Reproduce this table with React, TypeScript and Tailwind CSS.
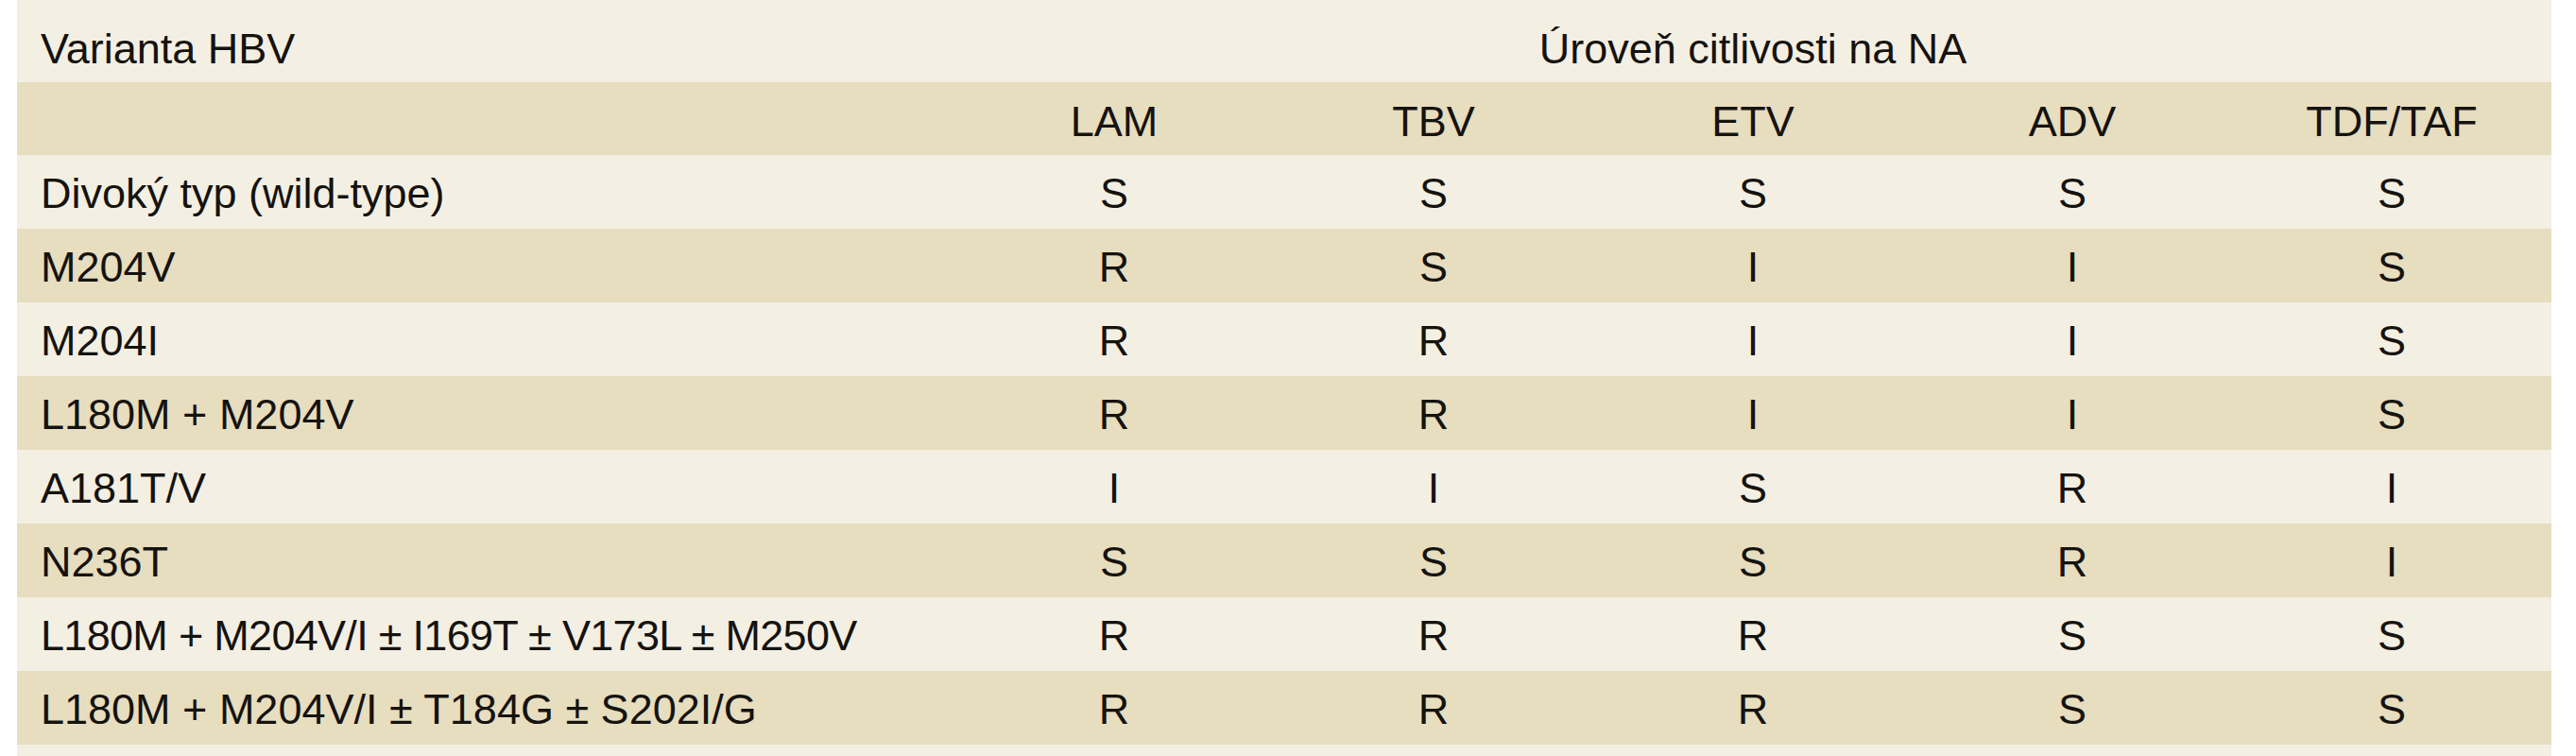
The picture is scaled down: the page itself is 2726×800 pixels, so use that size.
const columns = ['LAM', 'TBV', 'ETV', 'ADV', 'TDF/TAF'];

const rows: { variant: string; values: string[]; tight?: boolean }[] = [
  { variant: 'Divoký typ (wild-type)', values: ['S', 'S', 'S', 'S', 'S'] },
  { variant: 'M204V', values: ['R', 'S', 'I', 'I', 'S'] },
  { variant: 'M204I', values: ['R', 'R', 'I', 'I', 'S'] },
  { variant: 'L180M + M204V', values: ['R', 'R', 'I', 'I', 'S'] },
  { variant: 'A181T/V', values: ['I', 'I', 'S', 'R', 'I'] },
  { variant: 'N236T', values: ['S', 'S', 'S', 'R', 'I'] },
  { variant: 'L180M + M204V/I ± I169T ± V173L ± M250V', values: ['R', 'R', 'R', 'S', 'S'], tight: true },
  { variant: 'L180M + M204V/I ± T184G ± S202I/G', values: ['R', 'R', 'R', 'S', 'S'] },
];

export default function App() {
  return (
    <div className="min-h-screen bg-white pl-[18px] font-['Liberation_Sans',Arial,sans-serif] text-[45px] leading-[45px] text-[#15130f]">
      <div className="w-[2682px] bg-[#f4efe3] pb-6">
        {/* Top header: variant + sensitivity group */}
        <div className="grid h-[87px] grid-cols-[992px_1690px] items-center pt-[16px]">
          <div className="pl-[25px]">Varianta HBV</div>
          <div className="text-center">Úroveň citlivosti na NA</div>
        </div>

        {/* Drug names */}
        <div className="grid h-[77px] grid-cols-[992px_repeat(5,338px)] items-center bg-[#e7ddbf] pt-[6px]">
          <div />
          {columns.map((c) => (
            <div key={c} className="text-center">
              {c}
            </div>
          ))}
        </div>

        {/* Data rows */}
        {rows.map((row, i) => (
          <div
            key={row.variant}
            className={`grid h-[78px] grid-cols-[992px_repeat(5,338px)] items-center pt-[3px] ${
              i % 2 === 1 ? 'bg-[#e7ddbf]' : 'bg-[#f4efe3]'
            }`}
          >
            <div className={`whitespace-nowrap pl-[25px] ${row.tight ? 'tracking-[-0.7px]' : ''}`}>
              {row.variant}
            </div>
            {row.values.map((v, j) => (
              <div key={j} className="text-center">
                {v}
              </div>
            ))}
          </div>
        ))}
      </div>
    </div>
  );
}
